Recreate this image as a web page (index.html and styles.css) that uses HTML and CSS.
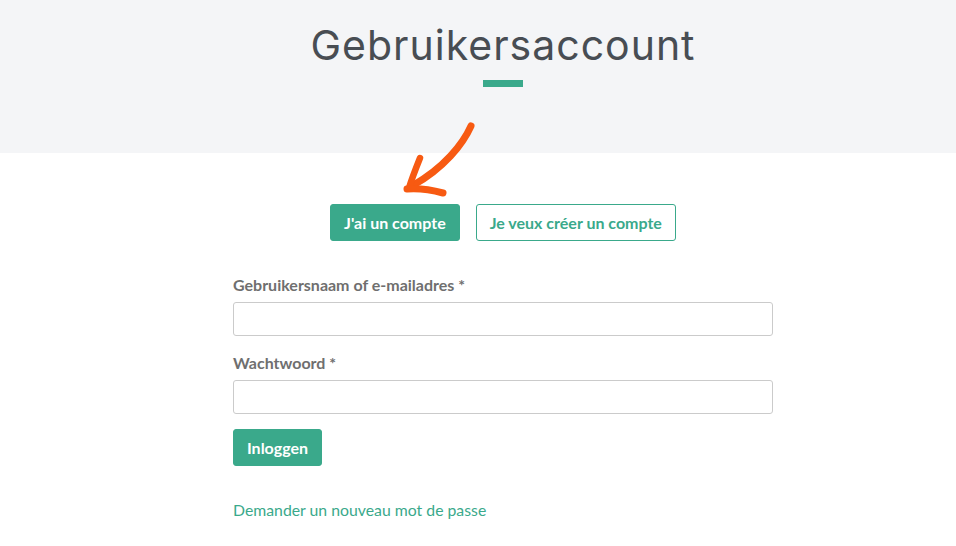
FILE: index.html
```html
<!DOCTYPE html>
<html>
<head>
  <link rel="stylesheet" href="styles.css">
</head>
<body>
  <div class="header">
    <h1 class="title">Gebruikersaccount</h1>
    <div class="title-bar"></div>
  </div>

  <div class="content">
    <svg class="arrow" width="90" height="80" viewBox="0 0 90 80">
      <path d="M79 6 C71 24 52 48 20 66" fill="none" stroke="#f75a12" stroke-width="7" stroke-linecap="round"/>
      <path d="M28 38 C24 48 20 58 17 68" fill="none" stroke="#f75a12" stroke-width="6.5" stroke-linecap="round"/>
      <path d="M15 69 C28 68 40 70 51 73" fill="none" stroke="#f75a12" stroke-width="7" stroke-linecap="round"/>
    </svg>

    <div class="tabs">
      <button class="btn btn-fill">J'ai un compte</button>
      <button class="btn btn-outline">Je veux créer un compte</button>
    </div>

    <form class="login">
      <label for="username">Gebruikersnaam of e-mailadres *</label>
      <input type="text" id="username">
      <label for="password">Wachtwoord *</label>
      <input type="password" id="password">
      <div>
        <button type="button" class="btn btn-fill">Inloggen</button>
      </div>
      <a href="#" class="lost">Demander un nouveau mot de passe</a>
    </form>
  </div>
</body>
</html>
```

FILE: styles.css
```css
body {
  margin: 0;
  font-family: Lato, "Liberation Sans", sans-serif;
  background: #fff;
}
.header {
  background-color: #f4f5f7;
  height: 153px;
  padding-left: 50px;
  box-sizing: border-box;
  display: flex;
  flex-direction: column;
  align-items: center;
  padding-top: 19px;
}
.title {
  margin: 0;
  font-family: Inter, "DejaVu Sans", sans-serif;
  font-weight: 400;
  font-size: 41px;
  letter-spacing: 1px;
  line-height: 52px;
  color: #484d53;
}
.title-bar {
  width: 40px;
  height: 7px;
  background-color: #3aa98b;
  margin-top: 9px;
}
.content {
  position: relative;
  padding-left: 50px;
  display: flex;
  flex-direction: column;
  align-items: center;
}
.arrow {
  position: absolute;
  left: 392px;
  top: -33px;
}
.tabs {
  display: flex;
  gap: 16px;
  margin-top: 51px;
}
.btn {
  font-family: Lato, "Liberation Sans", sans-serif;
  font-weight: 700;
  font-size: 16px;
  height: 37px;
  padding: 0 13px;
  border-radius: 3px;
  cursor: pointer;
}
.btn-fill {
  background-color: #3aa98b;
  border: 1px solid #3aa98b;
  color: #fff;
}
.btn-outline {
  background-color: #fff;
  border: 1px solid #3aa98b;
  color: #3aa98b;
}
.login {
  width: 540px;
  margin-top: 34px;
  display: flex;
  flex-direction: column;
}
.login label {
  font-weight: 700;
  font-size: 16px;
  color: #6f6f6f;
  margin-bottom: 8px;
}
.login input {
  height: 34px;
  border: 1px solid #cbcbcb;
  border-radius: 3px;
  box-sizing: border-box;
  margin-bottom: 17px;
  font-family: Lato, sans-serif;
  font-size: 15px;
}
.login .btn {
  margin-top: -2px;
}
.lost {
  margin-top: 34px;
  color: #3aa98b;
  text-decoration: none;
  font-size: 15.8px;
}
```
